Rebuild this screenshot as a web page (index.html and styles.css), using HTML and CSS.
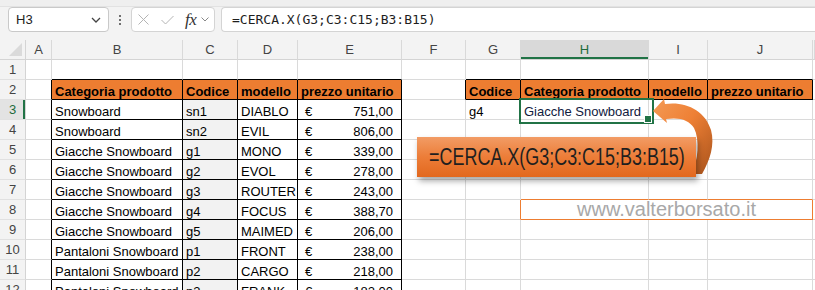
FILE: index.html
```html
<!DOCTYPE html>
<html lang="it">
<head>
<meta charset="utf-8">
<title>CERCA.X</title>
<link rel="stylesheet" href="styles.css">
</head>
<body>
<div class="topline"></div>
<div class="fbar">
  <div class="namebox"><span class="nb-text">H3</span><svg class="chev" width="10" height="6" viewBox="0 0 10 6"><polyline points="1,1 5,5 9,1"/></svg></div>
  <div class="dots"><i></i><i></i><i></i></div>
  <div class="fbtns">
    <svg class="ico-x" width="11" height="11" viewBox="0 0 11 11"><path d="M0.5 0.5L10.5 10.5M10.5 0.5L0.5 10.5"/></svg>
    <svg class="ico-ok" width="13" height="10" viewBox="0 0 13 10"><polyline points="0.5,5 4.5,9 12.5,1"/></svg>
    <span class="fx">fx</span>
    <svg class="chev sm" width="8" height="5" viewBox="0 0 8 5"><polyline points="0.5,0.5 4,4 7.5,0.5"/></svg>
  </div>
  <div class="finput">=CERCA.X(G3;C3:C15;B3:B15)</div>
</div>

<div class="sheet">
  <!-- header row -->
  <div class="corner"><svg width="14" height="14" viewBox="0 0 14 14"><polygon points="13,0 13,13 0,13"/></svg></div>
  <div class="ch">A</div><div class="ch">B</div><div class="ch">C</div><div class="ch">D</div><div class="ch">E</div><div class="ch">F</div><div class="ch">G</div><div class="ch ch-sel">H</div><div class="ch">I</div><div class="ch">J</div><div class="ch"></div>

  <!-- row 1 -->
  <div class="rh">1</div>
  <div class="g"></div><div class="g bb"></div><div class="g bb"></div><div class="g bb"></div><div class="g bb"></div><div class="g"></div><div class="g bb"></div><div class="g bb"></div><div class="g bb"></div><div class="g bb"></div><div class="g"></div>

  <!-- row 2 -->
  <div class="rh">2</div>
  <div class="g br"></div>
  <div class="g t hd">Categoria prodotto</div><div class="g t hd">Codice</div><div class="g t hd">modello</div><div class="g t hd">prezzo unitario</div>
  <div class="g br"></div>
  <div class="g t hd">Codice</div><div class="g t hd">Categoria prodotto</div><div class="g t hd">modello</div><div class="g t hd">prezzo unitario</div>
  <div class="g"></div>

  <!-- row 3 -->
  <div class="rh rh-sel">3</div>
  <div class="g br"></div>
  <div class="g t">Snowboard</div><div class="g t code">sn1</div><div class="g t">DIABLO</div><div class="g t num"><span>€</span><span>751,00</span></div>
  <div class="g"></div>
  <div class="g">g4</div><div class="g sel">Giacche Snowboard</div><div class="g"></div><div class="g"></div>
  <div class="g"></div>

  <!-- row 4 -->
  <div class="rh">4</div>
  <div class="g br"></div>
  <div class="g t">Snowboard</div><div class="g t code">sn2</div><div class="g t">EVIL</div><div class="g t num"><span>€</span><span>806,00</span></div>
  <div class="g"></div><div class="g"></div><div class="g"></div><div class="g"></div><div class="g"></div><div class="g"></div>

  <!-- row 5 -->
  <div class="rh">5</div>
  <div class="g br"></div>
  <div class="g t">Giacche Snowboard</div><div class="g t code">g1</div><div class="g t">MONO</div><div class="g t num"><span>€</span><span>339,00</span></div>
  <div class="g"></div><div class="g"></div><div class="g"></div><div class="g"></div><div class="g"></div><div class="g"></div>

  <!-- row 6 -->
  <div class="rh">6</div>
  <div class="g br"></div>
  <div class="g t">Giacche Snowboard</div><div class="g t code">g2</div><div class="g t">EVOL</div><div class="g t num"><span>€</span><span>278,00</span></div>
  <div class="g"></div><div class="g"></div><div class="g"></div><div class="g"></div><div class="g"></div><div class="g"></div>

  <!-- row 7 -->
  <div class="rh">7</div>
  <div class="g br"></div>
  <div class="g t">Giacche Snowboard</div><div class="g t code">g3</div><div class="g t">ROUTER</div><div class="g t num"><span>€</span><span>243,00</span></div>
  <div class="g"></div><div class="g"></div><div class="g ob"></div><div class="g ob"></div><div class="g ob"></div><div class="g"></div>

  <!-- row 8 -->
  <div class="rh">8</div>
  <div class="g br"></div>
  <div class="g t">Giacche Snowboard</div><div class="g t code">g4</div><div class="g t">FOCUS</div><div class="g t num"><span>€</span><span>388,70</span></div>
  <div class="g"></div><div class="g or"></div>
  <div class="g wm">www.valterborsato.it</div>
  <div class="g"></div>

  <!-- row 9 -->
  <div class="rh">9</div>
  <div class="g br"></div>
  <div class="g t">Giacche Snowboard</div><div class="g t code">g5</div><div class="g t">MAIMED</div><div class="g t num"><span>€</span><span>206,00</span></div>
  <div class="g"></div><div class="g"></div><div class="g"></div><div class="g"></div><div class="g"></div><div class="g"></div>

  <!-- row 10 -->
  <div class="rh">10</div>
  <div class="g br"></div>
  <div class="g t">Pantaloni Snowboard</div><div class="g t code">p1</div><div class="g t">FRONT</div><div class="g t num"><span>€</span><span>238,00</span></div>
  <div class="g"></div><div class="g"></div><div class="g"></div><div class="g"></div><div class="g"></div><div class="g"></div>

  <!-- row 11 -->
  <div class="rh">11</div>
  <div class="g br"></div>
  <div class="g t">Pantaloni Snowboard</div><div class="g t code">p2</div><div class="g t">CARGO</div><div class="g t num"><span>€</span><span>218,00</span></div>
  <div class="g"></div><div class="g"></div><div class="g"></div><div class="g"></div><div class="g"></div><div class="g"></div>

  <!-- row 12 -->
  <div class="rh">12</div>
  <div class="g br"></div>
  <div class="g t">Pantaloni Snowboard</div><div class="g t code">p3</div><div class="g t">FRANK</div><div class="g t num"><span>€</span><span>182,00</span></div>
  <div class="g"></div><div class="g"></div><div class="g"></div><div class="g"></div><div class="g"></div><div class="g"></div>
</div>

<svg class="arrow" width="80" height="100" viewBox="0 0 80 100">
  <defs>
    <linearGradient id="ag" x1="0" y1="0" x2="1" y2="1">
      <stop offset="0" stop-color="#f49a55"/>
      <stop offset="0.45" stop-color="#ee8035"/>
      <stop offset="1" stop-color="#a9531c"/>
    </linearGradient>
  </defs>
  <path d="M13,21 L24,9 L25,14 C45,11 65,20 71,40 C75,55 70,70 62,84 L52,84 C58,70 60,50 54,38 C49,30 40,27 26,29 L27,33 Z" fill="url(#ag)"/>
</svg>
<div class="callout"><span class="callout-text">=CERCA.X(G3;C3:C15;B3:B15)</span></div>
</body>
</html>
```
FILE: styles.css
```css
* { box-sizing: border-box; margin: 0; padding: 0; }
html, body { width: 815px; height: 290px; overflow: hidden; }
body {
  position: relative;
  background: #ffffff;
  font-family: "Liberation Sans", Arial, sans-serif;
  color: #000;
}

/* ---------- formula bar ---------- */
.topline { height: 7px; background: #efefef; border-bottom: 1px solid #e2e2e2; }
.fbar {
  height: 33px;
  background: #f3f3f3;
  display: flex;
  align-items: flex-start;
  padding-left: 8px;
}
.namebox {
  width: 101px; height: 25px;
  background: #fff;
  border: 1px solid #c9c9c9;
  border-radius: 4px;
  display: flex; align-items: center; justify-content: space-between;
  padding: 0 7px 0 7px;
  font-size: 13px; color: #222;
}
.chev { fill: none; stroke: #444; stroke-width: 1.3; }
.chev.sm { stroke: #888; stroke-width: 1; }
.dots {
  width: 22px; height: 25px;
  display: flex; flex-direction: column; align-items: center; justify-content: center; gap: 2px;
}
.dots i { display: block; width: 2px; height: 2px; background: #444; border-radius: 1px; }
.fbtns {
  width: 84px; height: 25px;
  background: #fff;
  border: 1px solid #d4d4d4;
  border-radius: 4px;
  display: flex; align-items: center;
  padding-left: 6px;
}
.ico-x { fill: none; stroke: #b4b4b4; stroke-width: 1; }
.ico-ok { fill: none; stroke: #b4b4b4; stroke-width: 1; margin-left: 12px; }
.fx {
  font-family: "Liberation Serif", "Times New Roman", serif;
  font-style: italic; font-size: 17px; color: #333;
  margin-left: 11px; letter-spacing: -0.5px;
}
.fbtns .chev.sm { margin-left: 5px; }
.finput {
  margin-left: 6px;
  flex: 1;
  height: 25px;
  background: #fff;
  border: 1px solid #d4d4d4;
  border-right: none;
  border-radius: 4px 0 0 4px;
  font-family: "DejaVu Sans Mono", "Liberation Mono", monospace;
  font-size: 13px; color: #1e1e1e;
  line-height: 23px;
  padding-left: 10px;
}

/* ---------- sheet ---------- */
.sheet {
  display: grid;
  grid-template-columns: 26px 26px 131px 55px 60px 104px 64px 55px 128px 59px 105px 2px;
  grid-template-rows: repeat(13, 20px);
  font-size: 13px;
}
.corner {
  background: #f3f3f3;
  border-right: 1px solid #d4d4d4;
  border-bottom: 1px solid #d4d4d4;
  display: flex; align-items: flex-end; justify-content: flex-end;
  padding: 0 2px 2px 0;
}
.corner polygon { fill: #dadada; }
.ch {
  background: #f3f3f3;
  border-right: 1px solid #d9d9d9;
  border-bottom: 1px solid #d4d4d4;
  color: #444;
  font-size: 13px;
  display: flex; align-items: center; justify-content: center;
}
.ch-sel { background: #d9d9d9; color: #1e6b3c; box-shadow: inset 0 -2px 0 #217346; }
.rh {
  background: #f3f3f3;
  border-right: 1px solid #d4d4d4;
  border-bottom: 1px solid #e1e1e1;
  color: #444;
  font-size: 13px;
  display: flex; align-items: center; justify-content: center;
}
.rh-sel { background: #e3e3e3; color: #1e6b3c; box-shadow: inset -2px 0 0 #217346; }

.g {
  border-right: 1px solid #dadada;
  border-bottom: 1px solid #dadada;
  display: flex; align-items: flex-end;
  line-height: 15px;
  padding-left: 3px;
  white-space: nowrap;
  overflow: hidden;
}
.bb { border-bottom-color: #000; }
.br { border-right-color: #000; }
.t { border-right-color: #000; border-bottom-color: #000; }
.hd { background: #ed7d31; font-weight: bold; }
.code { background: #f2f2f2; }
.num { justify-content: space-between; padding: 0 8px 0 7px; }
.ob { border-bottom-color: #ed7d31; }
.or { border-right-color: #ed7d31; }
.wm {
  grid-column: span 3;
  border-right-color: #ed7d31;
  border-bottom-color: #ed7d31;
  justify-content: center;
  align-items: center;
  padding: 0;
  overflow: visible;
  font-size: 20px;
  line-height: 19px;
  color: #a8a8a8;
}
.sel { position: relative; overflow: visible; color: #102040; }
.sel::after {
  content: "";
  position: absolute;
  left: -2px; top: -2px;
  width: 131px; height: 22px;
  border: 2px solid #217346;
}
.sel::before {
  content: "";
  position: absolute;
  right: -4px; bottom: -4px;
  width: 6px; height: 6px;
  background: #217346;
  border: 1px solid #fff;
  z-index: 2;
}

/* ---------- overlays ---------- */
.arrow { position: absolute; left: 640px; top: 90px; }
.callout {
  position: absolute;
  left: 417px; top: 137px;
  width: 279px; height: 40px;
  background: linear-gradient(#f29c65, #ec7d38 50%, #e2681e);
  box-shadow: 2px 4px 6px rgba(0, 0, 0, 0.35);
  display: flex; align-items: center; justify-content: center;
  color: #1f1f1f;
}
.callout-text {
  display: inline-block;
  font-family: "Liberation Sans", Arial, sans-serif;
  font-size: 23px;
  line-height: 26px;
  white-space: nowrap;
  transform: scaleX(0.78);
}
```
